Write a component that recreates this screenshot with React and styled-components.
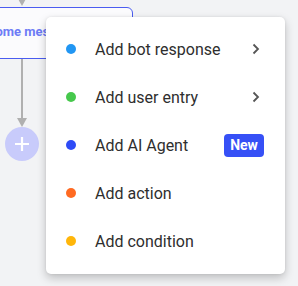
import React from 'react';
import styled, {createGlobalStyle} from 'styled-components';

const GlobalStyle = createGlobalStyle`
    html, body {
        margin: 0;
        padding: 0;
        background: #f2f3f5;
        font-family: Roboto, "Liberation Sans", sans-serif;
    }
`

const items = [
    {label: 'Add bot response', color: '#2196f3', sub: true},
    {label: 'Add user entry', color: '#46c84c', sub: true},
    {label: 'Add AI Agent', color: '#2e4bf6', badge: 'New'},
    {label: 'Add action', color: '#ff6a22'},
    {label: 'Add condition', color: '#ffb60a'},
]

const Chevron = () => (
    <svg width="8" height="12" viewBox="0 0 8 12">
        <path d="M1.5 1.5 L6 6 L1.5 10.5" fill="none" stroke="#555" strokeWidth="1.8" />
    </svg>
)

const Arrow = ({length}) => (
    <svg width="12" height={length} viewBox={`0 0 12 ${length}`}>
        <line x1="6" y1="0" x2="6" y2={length - 4} stroke="#b0b0b0" strokeWidth="2" />
        <path d={`M1 ${length - 9} L6 ${length} L11 ${length - 9} Z`} fill="#b0b0b0" />
    </svg>
)

export default function App() {
    return (
        <Page>
            <GlobalStyle />
            <Flow>
                <Arrow length={6} />
                <NodeCard>Welcome message</NodeCard>
                <Arrow length={68} />
                <AddButton>
                    <svg width="18" height="18" viewBox="0 0 18 18">
                        <path d="M9 2 V16 M2 9 H16" stroke="#fff" strokeWidth="2.2" />
                    </svg>
                </AddButton>
            </Flow>
            <Menu>
                {items.map(item => (
                    <MenuRow key={item.label}>
                        <Dot color={item.color} />
                        <Label>{item.label}</Label>
                        {item.sub ? <Chevron /> : null}
                        {item.badge ? <Badge>{item.badge}</Badge> : null}
                    </MenuRow>
                ))}
            </Menu>
        </Page>
    )
}

const Page = styled.div`
    position: relative;
    width: 298px;
    height: 286px;
    overflow: hidden;
    background: #f2f3f5;
`
const Flow = styled.div`
    display: flex;
    flex-direction: column;
    align-items: center;
    width: 44px;
`
const NodeCard = styled.div`
    box-sizing: border-box;
    align-self: flex-end;
    margin-right: -89px;
    margin-top: 1px;
    width: 230px;
    height: 52px;
    padding-top: 16px;
    padding-left: 63px;
    border: 1px solid #4a5cf0;
    border-radius: 6px;
    background: #fbfbfd;
    color: #6d7cf6;
    font-weight: 700;
    font-size: 13px;
    white-space: nowrap;
`
const AddButton = styled.div`
    width: 34px;
    height: 34px;
    border-radius: 50%;
    background: #c8cbfb;
    display: flex;
    align-items: center;
    justify-content: center;
`
const Menu = styled.div`
    position: absolute;
    left: 46px;
    top: 17px;
    width: 239px;
    box-sizing: border-box;
    padding: 8px 0 9px;
    background: #fff;
    border-radius: 5px;
    box-shadow: 0 4px 10px rgba(0, 0, 0, 0.22), 0 0 3px rgba(0, 0, 0, 0.08);
`
const MenuRow = styled.div`
    display: flex;
    align-items: center;
    height: 48px;
    padding: 0 25px 0 20px;
`
const Dot = styled.span`
    width: 10px;
    height: 10px;
    border-radius: 50%;
    background: ${props => props.color};
    margin-right: 19px;
    flex-shrink: 0;
`
const Label = styled.span`
    flex: 1;
    font-size: 16px;
    color: #2e2e2e;
`
const Badge = styled.span`
    margin-right: -4px;
    height: 23px;
    width: 40px;
    display: flex;
    align-items: center;
    justify-content: center;
    border-radius: 4px;
    background: #3650f6;
    color: #fff;
    font-weight: 700;
    font-size: 14px;
`
